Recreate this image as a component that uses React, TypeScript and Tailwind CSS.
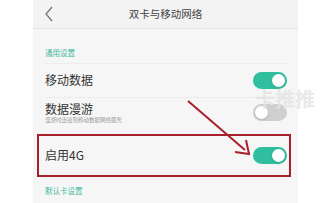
import React from 'react';

function Toggle({ on }: { on: boolean }) {
    return (
        <div
            className={`flex h-[17px] w-[34px] items-center rounded-full px-[2px] ${
                on ? 'justify-end bg-[#2fbf9f]' : 'justify-start bg-[#cfcfcf]'
            }`}
        >
            <div className="h-[13px] w-[13px] rounded-full bg-white shadow-sm" />
        </div>
    );
}

export default function App() {
    return (
        <div
            className="relative flex h-[203px] w-[321px] overflow-hidden bg-white"
            style={{ fontFamily: '"Noto Sans CJK SC", "Noto Sans", sans-serif' }}
        >
            <div className="w-[33px] shrink-0" />
            <div className="flex w-[265px] flex-col bg-[#f6f6f6]">
                <div className="relative flex h-[29px] items-center justify-center border-b border-[#e6e6e6] bg-[#f3f3f3]">
                    <svg className="absolute left-[11px] top-[6px]" width="10" height="16" viewBox="0 0 10 16">
                        <path d="M8 1 L2 8 L8 15" fill="none" stroke="#777" strokeWidth="1.3" />
                    </svg>
                    <span className="text-[10.5px] text-[#444]">双卡与移动网络</span>
                </div>

                <div className="px-[12px] pt-[20px] pb-[6px] text-[7.5px] leading-none text-[#41b89c]">通用设置</div>

                <div className="ml-[12px] mr-[11px] flex h-[34px] items-center justify-between border-t border-[#ececec]">
                    <span className="text-[12px] text-[#333]">移动数据</span>
                    <Toggle on />
                </div>

                <div className="ml-[12px] mr-[11px] flex h-[31px] items-center justify-between border-t border-[#ececec]">
                    <div className="flex flex-col gap-[2px] pt-[1px]">
                        <span className="text-[12px] leading-[12px] text-[#333]">数据漫游</span>
                        <span className="text-[5.5px] leading-[6px] text-[#999]">漫游时连接到移动数据网络服务</span>
                    </div>
                    <Toggle on={false} />
                </div>

                <div className="ml-[4px] mr-[7px] mt-[6px] flex h-[43px] items-center justify-between border-2 border-[#a8202c] pl-[6px] pr-[2px]">
                    <span className="text-[12px] text-[#333]">启用4G</span>
                    <Toggle on />
                </div>

                <div className="px-[12px] pt-[10px] text-[7.5px] leading-none text-[#41b89c]">默认卡设置</div>
            </div>

            <svg className="absolute left-0 top-0" width="321" height="203" viewBox="0 0 321 203">
                <line x1="188" y1="101" x2="245" y2="150" stroke="#a8202c" strokeWidth="2" />
                <path d="M235 152 L249 154 L246 140" fill="none" stroke="#a8202c" strokeWidth="2" />
            </svg>

            <div className="absolute left-[255px] top-[84px] text-[20px] font-bold text-[#e4e4e4]/80">卡推推</div>
        </div>
    );
}
